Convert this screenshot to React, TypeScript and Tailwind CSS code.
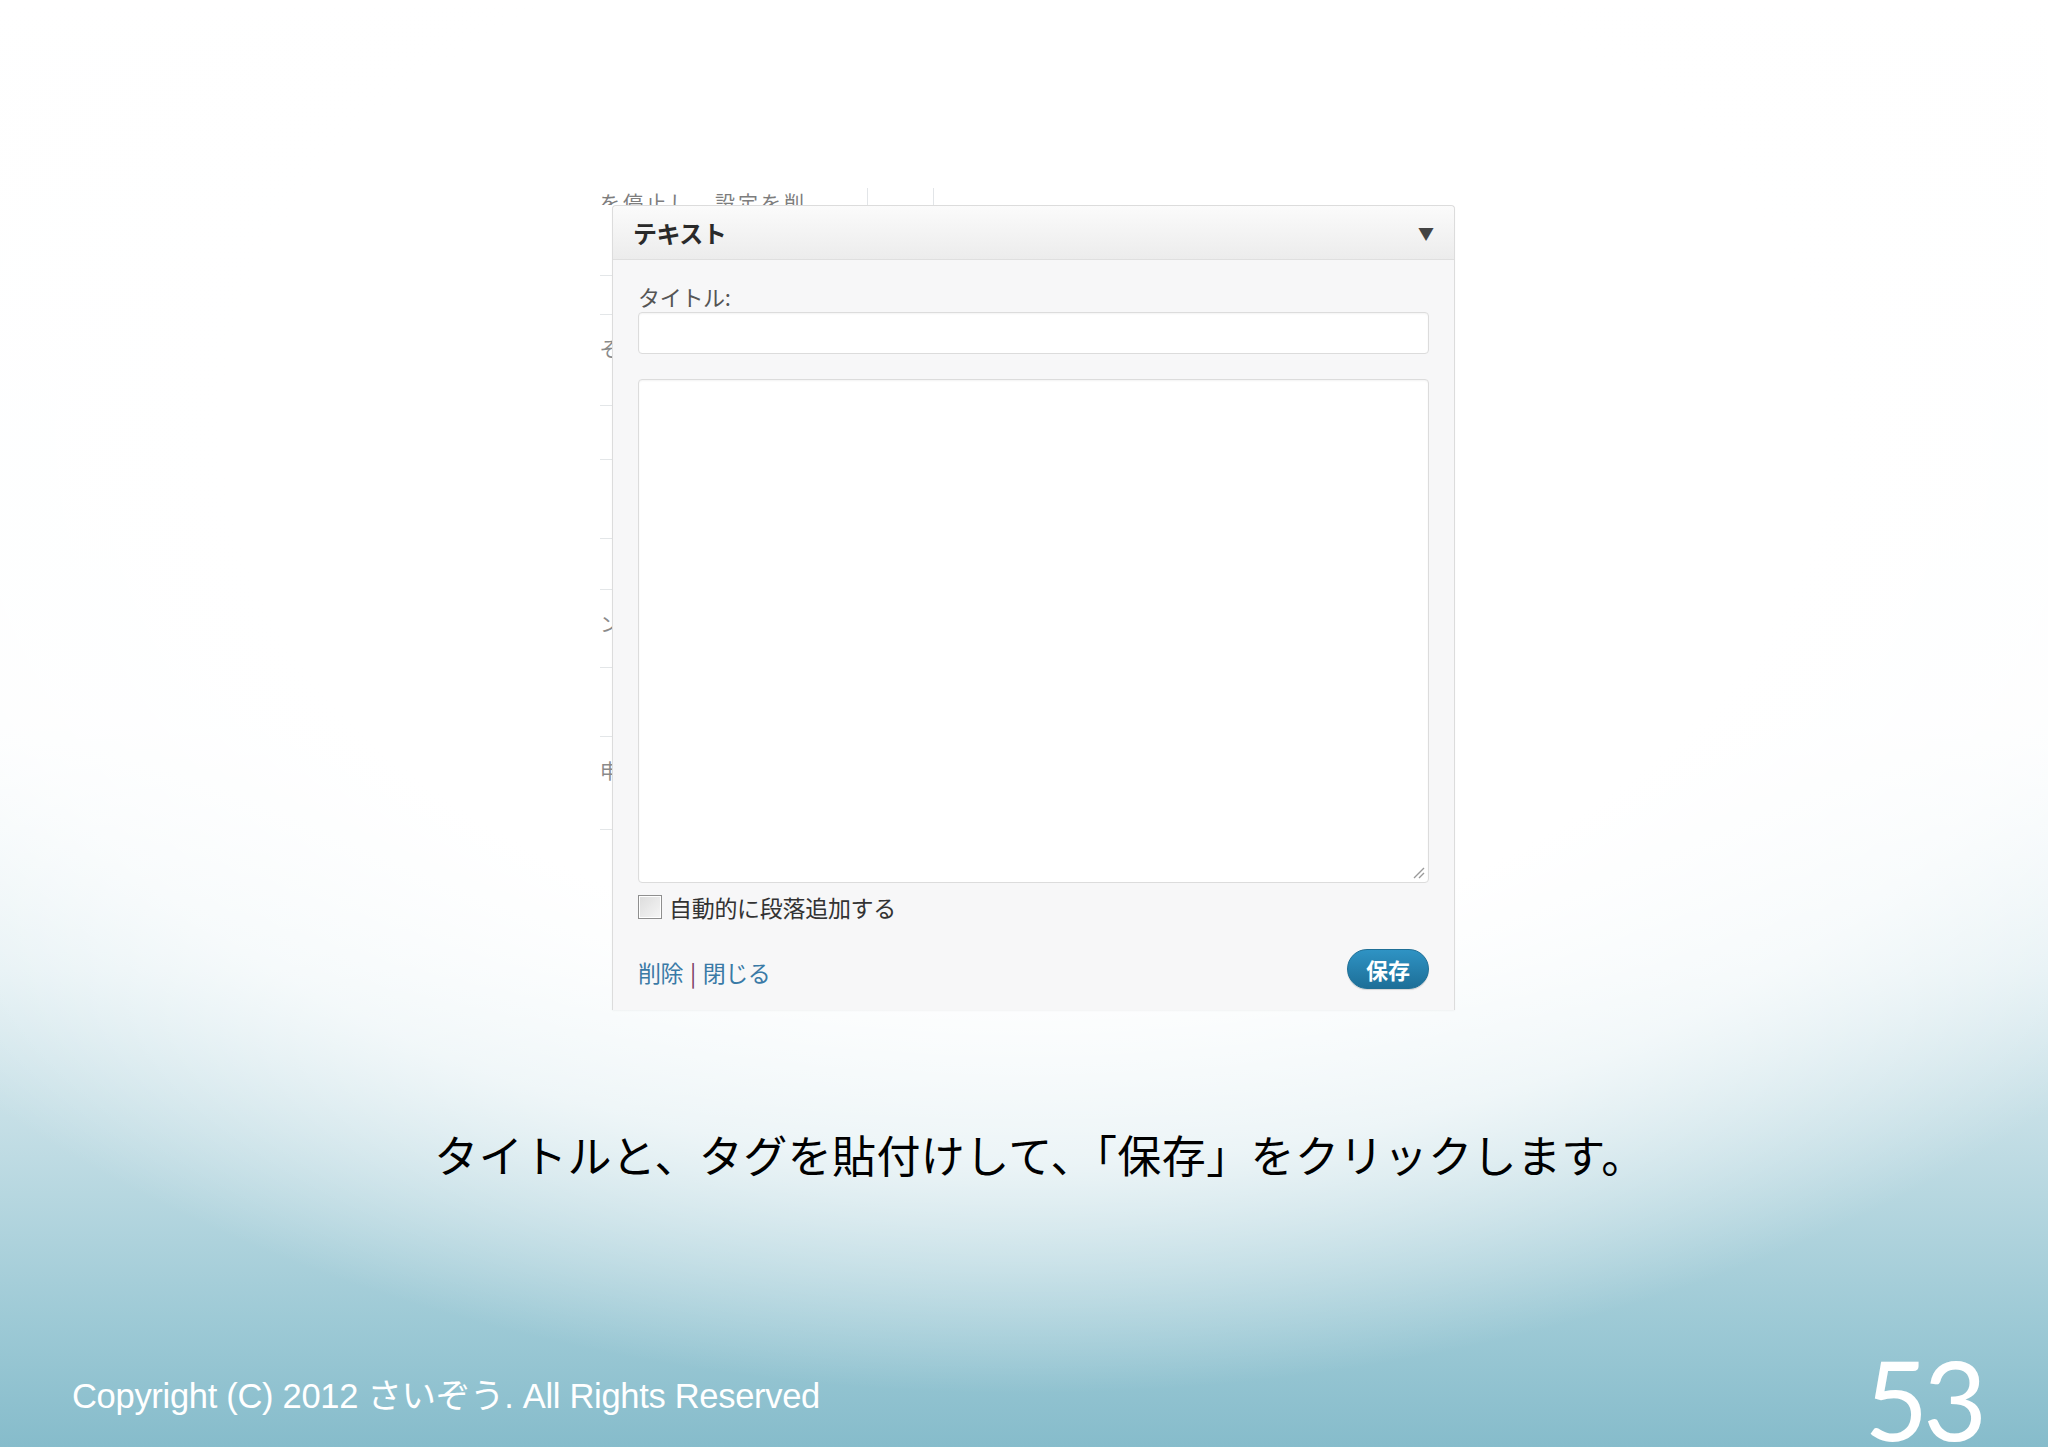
const jp = "font-['Noto_Sans_CJK_JP',sans-serif]";

// left edge of the WordPress page that peeks out from behind the widget panel
const sideRows = [
  { h: 71, glyph: "" },
  { h: 39, glyph: "" },
  { h: 91, glyph: "ぞ" },
  { h: 54, glyph: "" },
  { h: 79, glyph: "" },
  { h: 51, glyph: "" },
  { h: 78, glyph: "ン" },
  { h: 69, glyph: "" },
  { h: 93, glyph: "申" },
];

const SideStrip = () => (
  <div className="flex w-[12px] flex-col overflow-hidden">
    {sideRows.map((r, i) => (
      <div
        key={i}
        className="flex shrink-0 items-start border-b border-[#e3e6e8] pt-[24px] text-[20px] leading-none text-[#8a8a8a]"
        style={{ height: r.h }}
      >
        <span className="whitespace-nowrap">{r.glyph}</span>
      </div>
    ))}
  </div>
);

const ResizeGrip = () => (
  <svg className="absolute bottom-[3px] right-[3px]" width="14" height="14" viewBox="0 0 14 14">
    <path d="M13 3 L3 13 M13 8 L8 13" stroke="#9a9a9a" strokeWidth="1.4" />
  </svg>
);

const WidgetPanel = () => (
  <div className="flex w-[843px] flex-col rounded-t-[4px] border border-b-0 border-[#dcdcdc] bg-[#f7f7f8] shadow-[0_1px_2px_rgba(0,0,0,0.04)]">
    <div className="flex h-[54px] items-center justify-between rounded-t-[4px] border-b border-[#dfdfdf] bg-gradient-to-b from-[#fbfbfb] to-[#ececec] pl-[20px] pr-[20px]">
      <span className="text-[24px] font-bold tracking-[-0.5px] text-[#2a2a2a]">テキスト</span>
      <span className="text-[16px] leading-none text-[#444]">▼</span>
    </div>
    <div className="flex flex-col px-[25px] pb-[20px] pt-[20px]">
      <label className="text-[22px] leading-[32px] tracking-[-0.3px] text-[#555]">タイトル:</label>
      <div className="h-[42px] rounded-[4px] border border-[#dcdcdc] bg-white shadow-[inset_0_1px_2px_rgba(0,0,0,0.05)]" />
      <div className="relative mt-[25px] h-[504px] rounded-[4px] border border-[#dcdcdc] bg-white shadow-[inset_0_1px_2px_rgba(0,0,0,0.05)]">
        <ResizeGrip />
      </div>
      <div className="mt-[10px] flex h-[28px] items-center gap-[7px]">
        <span className="h-[24px] w-[24px] shrink-0 border border-[#8f8f8f] bg-gradient-to-br from-[#dcdcdc] to-[#f6f6f6] shadow-[inset_0_0_0_1px_#ffffff]" />
        <span className="text-[23px] tracking-[-0.3px] text-[#333]">自動的に段落追加する</span>
      </div>
      <div className="mt-[28px] flex items-center justify-between">
        <div className="flex items-center gap-[7px] pt-[6px] text-[23px] tracking-[-0.5px]">
          <span className="text-[#3a7aa6]">削除</span>
          <span className="text-[#7a3c64]">|</span>
          <span className="text-[#3a7aa6]">閉じる</span>
        </div>
        <button className="flex h-[40px] w-[82px] items-center justify-center rounded-full border border-[#1f6f96] bg-gradient-to-b from-[#2f93c4] to-[#1d6f98] text-[22px] font-bold text-white shadow-[0_1px_1px_rgba(0,0,0,0.15)]">
          保存
        </button>
      </div>
    </div>
  </div>
);

const App = () => {
  return (
    <div
      className={`flex h-[1447px] w-[2048px] flex-col overflow-hidden ${jp} bg-[radial-gradient(ellipse_1450px_960px_at_50%_30%,#ffffff_0%,#ffffff_55%,rgba(255,255,255,0.7)_76%,rgba(255,255,255,0)_100%),linear-gradient(to_bottom,#ffffff_0%,#fafcfd_50%,#e0eef2_67%,#bedbe3_80%,#9ecad6_91%,#86bccb_100%)]`}
    >
      {/* captured screenshot */}
      <div className="ml-[600px] mt-[188px] flex flex-col self-start">
        <div className="flex h-[17px] items-start overflow-hidden">
          <span className="w-[267px] whitespace-nowrap pt-[3px] text-[20px] leading-[24px] tracking-[3px] text-[#7d7d7d]">
            を停止し、設定を削
          </span>
          <span className="h-full w-[66px] border-l border-[#e2e5e8]" />
          <span className="h-full border-l border-[#e2e5e8]" />
        </div>
        <div className="flex">
          <SideStrip />
          <WidgetPanel />
        </div>
      </div>

      <p className="ml-[32px] mt-[114px] self-center text-[44px] leading-[60px] tracking-[0.4px] text-black">
        タイトルと、タグを貼付けして、「保存」をクリックします。
      </p>

      <div className="mt-auto flex w-full items-end justify-between pl-[72px] pr-[66px]">
        <span className="pb-[24px] font-['Liberation_Sans','Noto_Sans_CJK_JP',sans-serif] text-[34.5px] tracking-[-0.3px] text-white">
          Copyright (C) 2012 さいぞう. All Rights Reserved
        </span>
        <span className="mb-[-6px] font-['Lato',sans-serif] text-[110px] font-normal leading-[110px] tracking-[-5px] text-white">
          53
        </span>
      </div>
    </div>
  );
};

export default App;
